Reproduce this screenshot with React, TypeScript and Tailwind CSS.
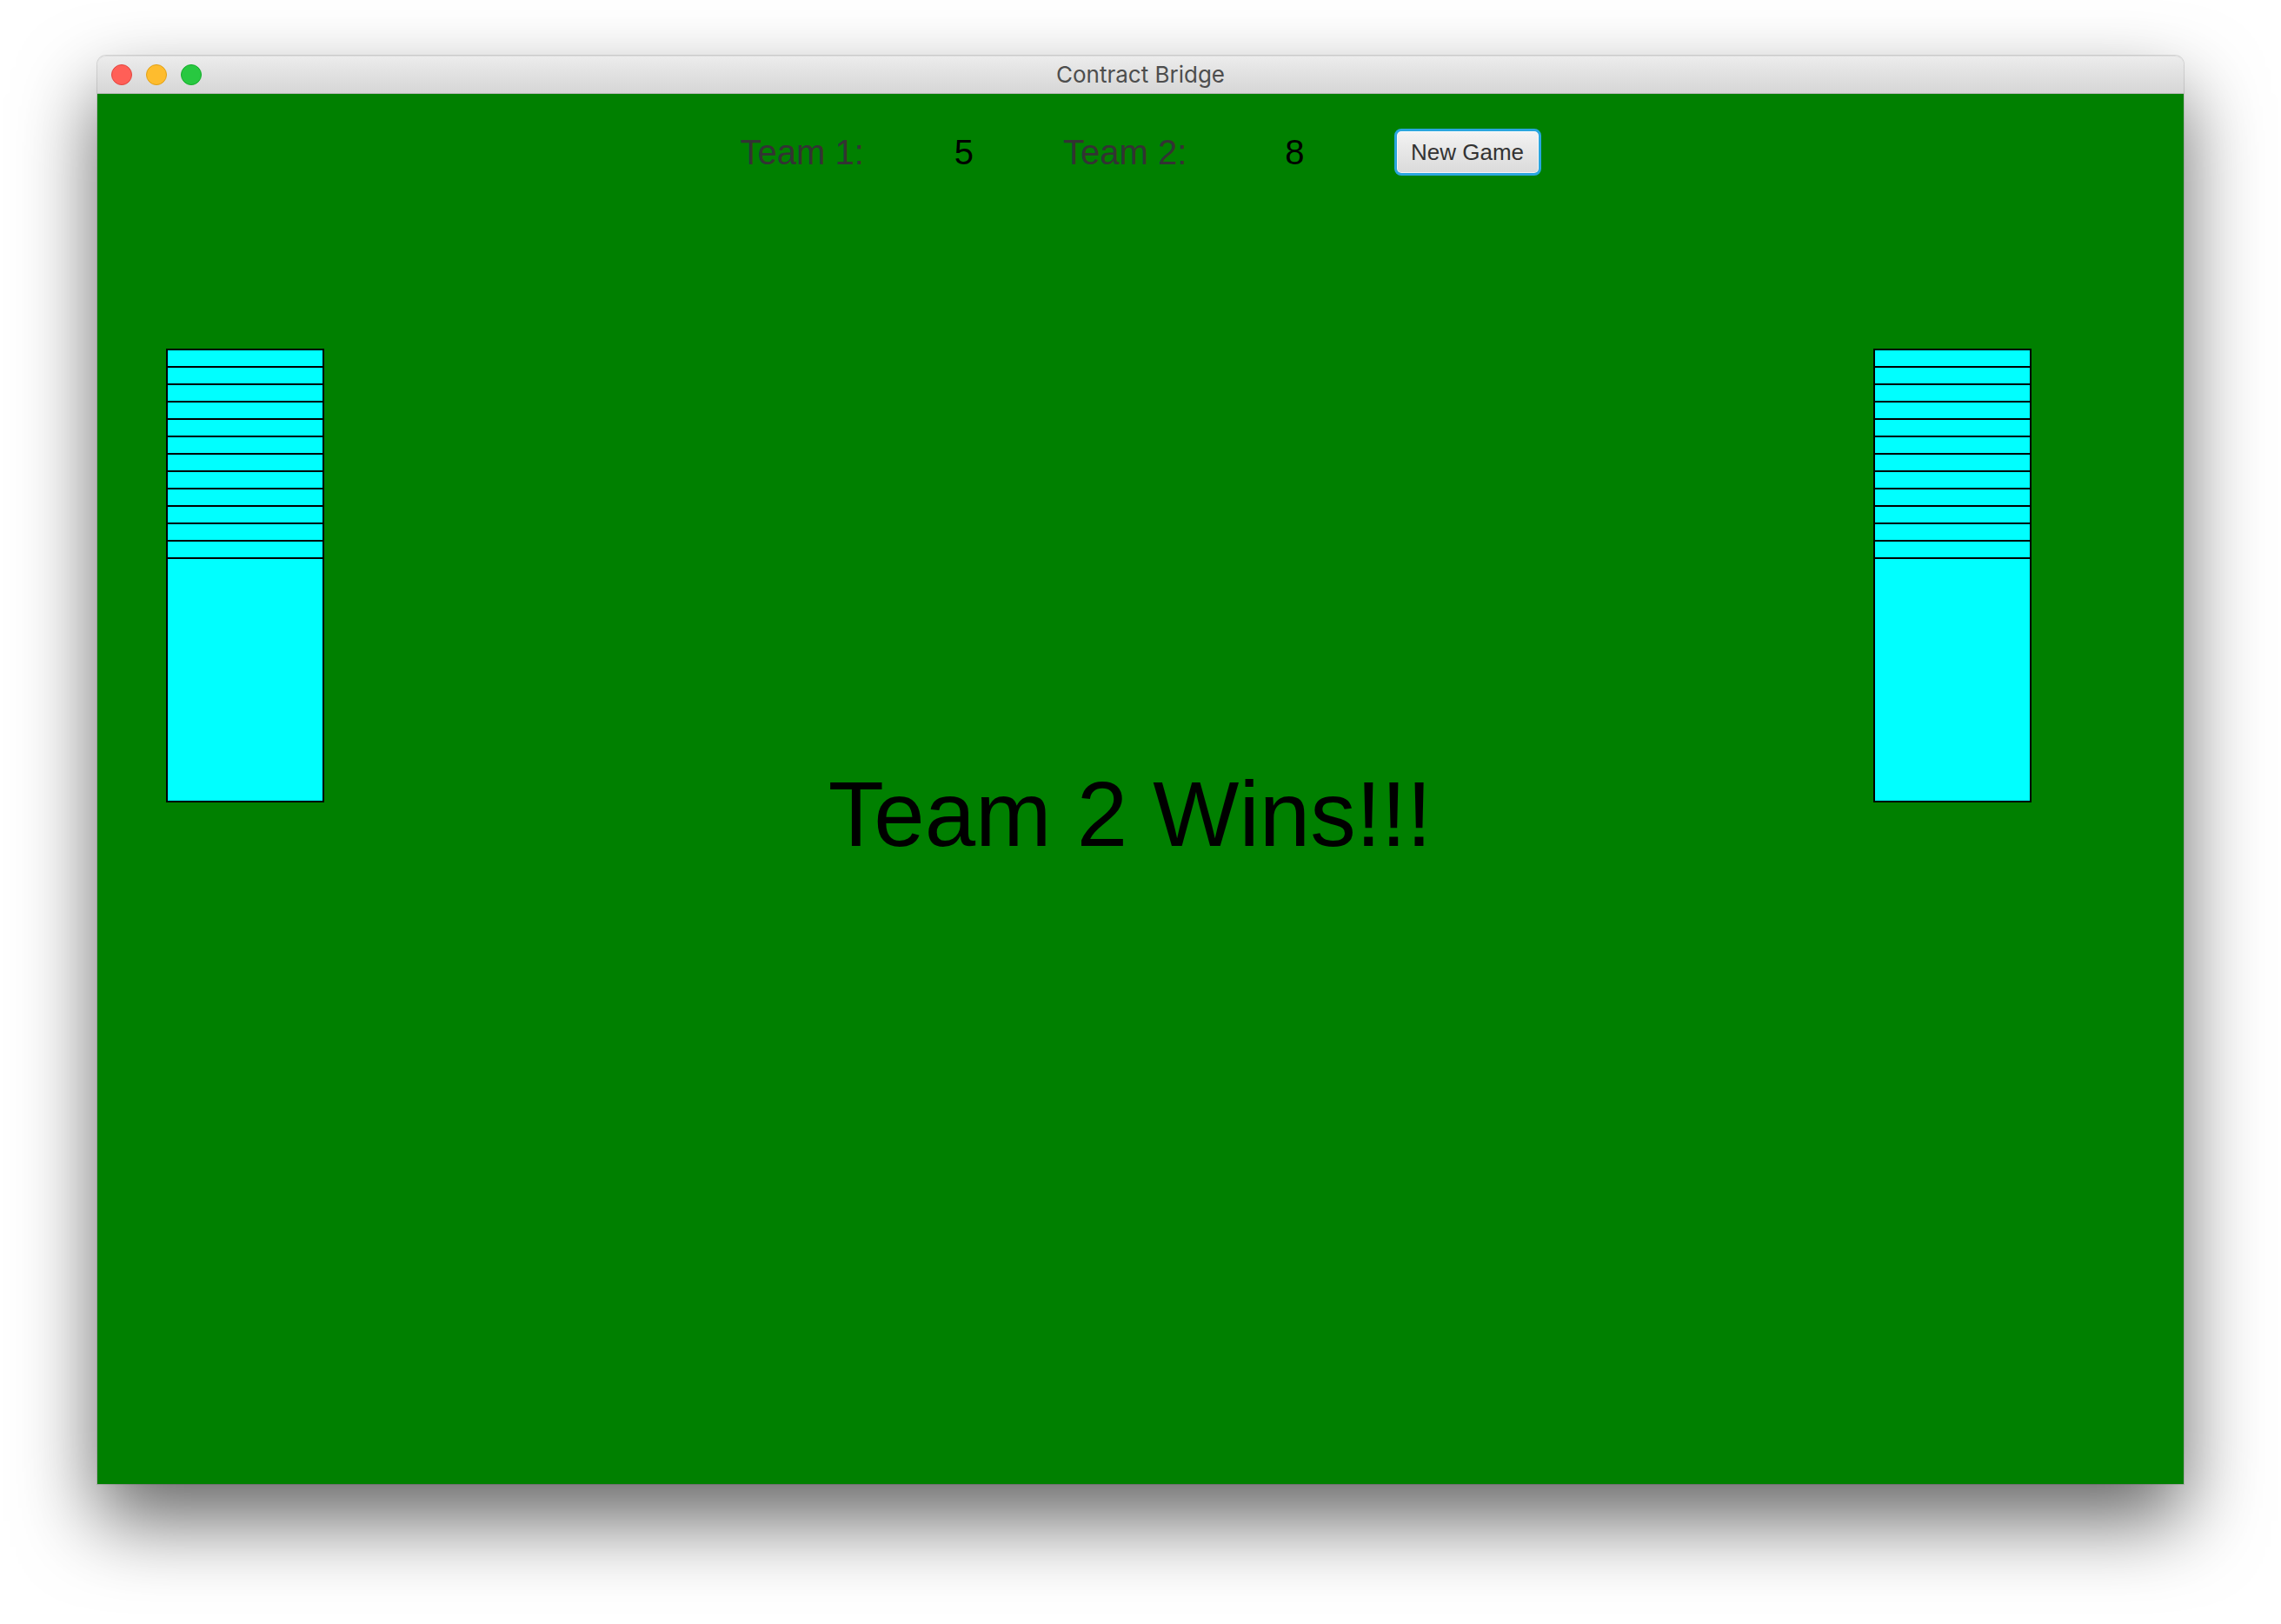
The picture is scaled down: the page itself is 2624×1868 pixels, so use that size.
import React from "react";

const CARD_COUNT = 13;

function CardStack() {
  return (
    <div className="flex flex-col w-[182px]">
      {Array.from({ length: CARD_COUNT }).map((_, i) => (
        <div
          key={i}
          className={`h-[282px] w-[182px] border-2 border-black bg-[#00ffff] ${i === 0 ? "" : "-mt-[262px]"}`}
        />
      ))}
    </div>
  );
}

function TrafficLights() {
  return (
    <div className="flex items-center gap-[16px] pl-[16px]">
      <span className="w-[24px] h-[24px] rounded-full bg-[#ff5f57] border border-[#e2463f]" />
      <span className="w-[24px] h-[24px] rounded-full bg-[#febc2e] border border-[#e1a116]" />
      <span className="w-[24px] h-[24px] rounded-full bg-[#28c840] border border-[#14ae2a]" />
    </div>
  );
}

export default function App() {
  return (
    <div className="h-[1868px] w-[2624px] bg-white overflow-hidden pt-[64px] px-[112px]">
      <div className="w-[2400px] rounded-t-[10px] shadow-[0_42px_90px_rgba(0,0,0,0.6),0_0_0_1px_rgba(0,0,0,0.12)]">
        {/* title bar */}
        <div className="relative h-[44px] rounded-t-[10px] bg-gradient-to-b from-[#ececec] to-[#d6d6d6] border-t border-[#dcdcdc] border-b border-b-[#b9b9b9] flex items-center">
          <TrafficLights />
          <div className="absolute inset-0 flex items-center justify-center text-[26px] text-[#4d4d4d] font-['Inter',sans-serif] leading-none">
            Contract Bridge
          </div>
        </div>

        {/* game table */}
        <div className="h-[1599px] bg-[#008000] flex flex-col font-['Liberation_Sans',Arial,sans-serif]">
          <div className="pt-[40px] flex justify-center items-center h-[94px]">
            <span className="text-[40px] leading-none text-[#333333]">Team 1:</span>
            <span className="ml-[104px] text-[40px] leading-none text-black">5</span>
            <span className="ml-[103px] text-[40px] leading-none text-[#333333]">Team 2:</span>
            <span className="ml-[113px] text-[40px] leading-none text-black">8</span>
            <button className="ml-[103px] w-[169px] h-[54px] rounded-[8px] border-[3px] border-[#2aa6df] bg-gradient-to-b from-[#f3f3f3] to-[#dadada] shadow-[inset_0_0_0_1px_rgba(255,255,255,0.7)] text-[26px] leading-none text-[#333333]">
              New Game
            </button>
          </div>

          <div className="mt-[199px] flex pl-[79px] pr-[175px]">
            <CardStack />
            <div className="flex-1 flex justify-center pl-[72px] pt-[483px]">
              <span className="text-[105px] leading-none text-black whitespace-nowrap">Team 2 Wins!!!</span>
            </div>
            <CardStack />
          </div>
        </div>
      </div>
    </div>
  );
}
